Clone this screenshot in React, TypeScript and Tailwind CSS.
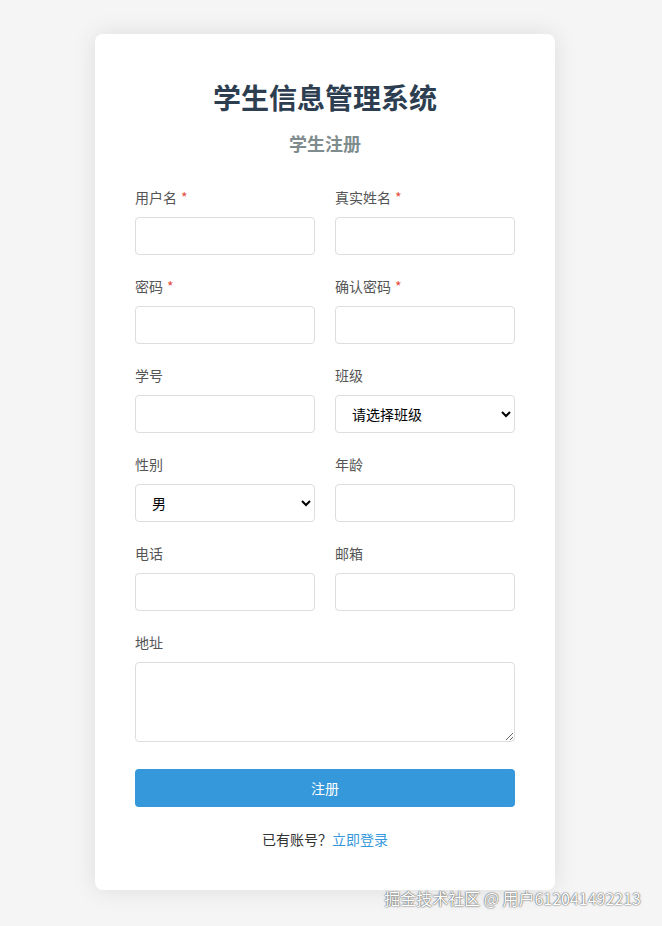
import React from "react";

const font = { fontFamily: '"Noto Sans CJK SC", "Noto Sans", sans-serif' };

const Label = ({ text, required }: { text: string; required?: boolean }) => (
  <label className="block text-[14px] leading-[22px] text-[#555] mb-[9px]">
    {text}
    {required && <span className="text-[#e74c3c] ml-1">*</span>}
  </label>
);

const inputCls =
  "block w-full h-[38px] px-[10px] border border-[#ddd] rounded-[4px] bg-white text-[14px] outline-none";

const selectCls =
  "block w-full h-[38px] pl-[12px] pr-[6px] border border-[#ddd] rounded-[4px] bg-white text-[14px] text-black";

const Field = ({ label, required, children }: { label: string; required?: boolean; children?: React.ReactNode }) => (
  <div className="mb-[20px]">
    <Label text={label} required={required} />
    {children ?? <input className={inputCls} />}
  </div>
);

export default function App() {
  return (
    <div className="relative min-h-screen bg-[#f5f5f5] pr-[12px] pt-[34px] pb-[37px]" style={font}>
      <div className="mx-auto w-[460px] bg-white rounded-[8px] shadow-[0_0_24px_rgba(0,0,0,0.1)] px-[40px] pt-[40px] pb-[41px]">
        <h1 className="text-center text-[28px] leading-[46px] font-bold text-[#2c3e50]">学生信息管理系统</h1>
        <h2 className="mt-[11px] mb-[31px] text-center text-[18px] leading-[24px] font-bold text-[#7f8c8d]">学生注册</h2>
        <div className="grid grid-cols-2 gap-x-[20px]">
          <Field label="用户名" required />
          <Field label="真实姓名" required />
          <Field label="密码" required>
            <input type="password" className={inputCls} />
          </Field>
          <Field label="确认密码" required>
            <input type="password" className={inputCls} />
          </Field>
          <Field label="学号" />
          <Field label="班级">
            <select className={selectCls}>
              <option>请选择班级</option>
            </select>
          </Field>
          <Field label="性别">
            <select className={selectCls}>
              <option>男</option>
              <option>女</option>
            </select>
          </Field>
          <Field label="年龄" />
          <Field label="电话" />
          <Field label="邮箱" />
        </div>
        <div className="mb-[27px]">
          <Label text="地址" />
          <textarea className="block w-full h-[80px] px-[10px] py-[8px] border border-[#ddd] rounded-[4px] bg-white text-[14px] outline-none" />
        </div>
        <button className="block w-full h-[38px] rounded-[4px] bg-[#3498db] text-white text-[14px]">注册</button>
        <p className="mt-[22px] text-center text-[14px] leading-[20px] text-[#333]">
          已有账号？<a className="text-[#3498db]">立即登录</a>
        </p>
      </div>
      <div className="absolute right-[21px] bottom-[19px] text-[16px] leading-[20px] text-white [text-shadow:0_0_2px_rgba(0,0,0,0.6),0_0_1px_rgba(0,0,0,0.6)]">
        掘金技术社区 @ 用户612041492213
      </div>
    </div>
  );
}
